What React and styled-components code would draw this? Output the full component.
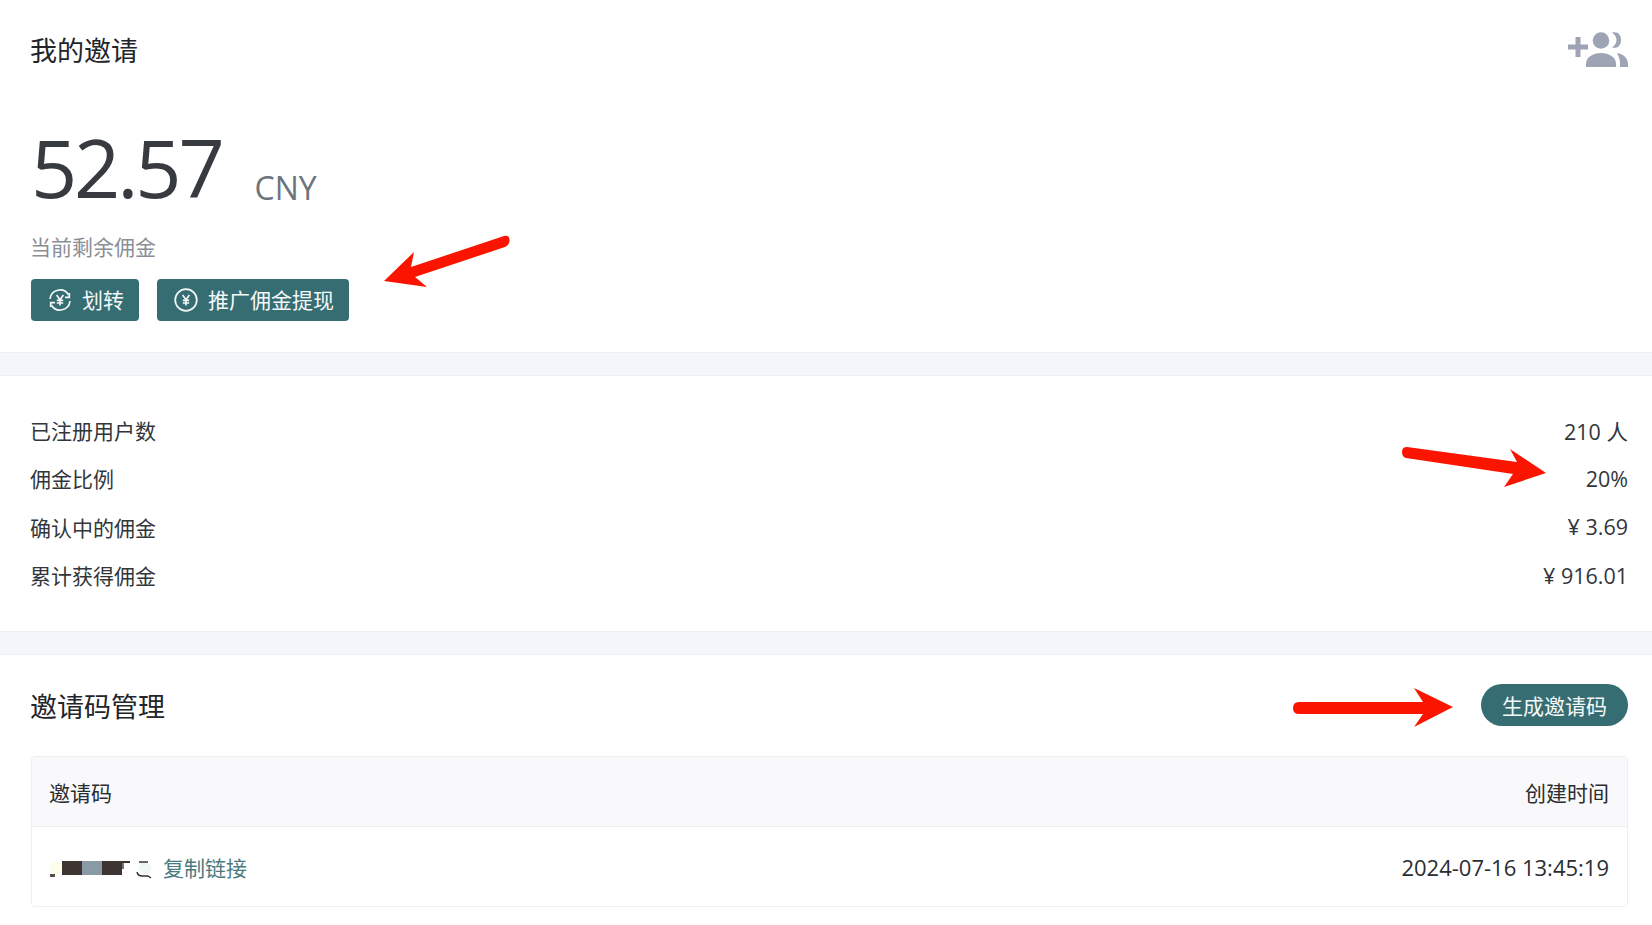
import React from "react";
import styled, { createGlobalStyle } from "styled-components";

const FONT = `"Open Sans", "Noto Sans CJK SC", sans-serif`;
const TEAL = "#366d72";

const GlobalStyle = createGlobalStyle`
  html, body {
    margin: 0;
    background: #fff;
    font-family: ${FONT};
    color: #32363b;
  }
`;

const Page = styled.div`
  position: relative;
  width: 100%;
  height: 925px;
  overflow: hidden;
`;

const Section = styled.section`
  padding: ${(p) => p.$padding};
`;

const Band = styled.div`
  height: 22px;
  background: #f4f6fb;
  border-top: 1px solid #eceef2;
  border-bottom: 1px solid #eceef2;
`;

const HeaderRow = styled.div`
  display: flex;
  justify-content: space-between;
  align-items: center;
`;

const Title = styled.h2`
  margin: 0;
  padding-top: ${(p) => p.$nudge || 0}px;
  font-weight: 400;
  font-size: ${(p) => p.$size};
  color: #22252a;
  line-height: 40px;
`;

const AmountRow = styled.div`
  display: flex;
  align-items: baseline;
  margin-top: 51px;
  height: 90px;
  line-height: 90px;
`;

const Amount = styled.span`
  font-size: 81px;
  font-weight: 400;
  letter-spacing: -3.2px;
  color: #373b40;
  margin-left: 1px;
`;

const Unit = styled.span`
  font-size: 32px;
  color: #6c757d;
  margin-left: 33px;
  transform: translateY(2px);
`;

const Hint = styled.div`
  margin-top: 19px;
  font-size: 21px;
  line-height: 32px;
  color: #8a8f96;
`;

const Actions = styled.div`
  display: flex;
  gap: 18px;
  margin: 16px 0 0 1px;
`;

const ActionButton = styled.button`
  display: flex;
  align-items: center;
  gap: 10px;
  height: 42px;
  padding: 0 15px 0 17px;
  background: ${TEAL};
  border: 0;
  border-radius: 4px;
  color: #f4f8f8;
  font-family: ${FONT};
  font-size: 21px;
`;

const ActionLabel = styled.span`
  margin-top: -2px;
`;

const Stat = styled.div`
  display: flex;
  justify-content: space-between;
  align-items: center;
  height: 48.3px;
  font-size: 21px;
`;

const StatValue = styled.span`
  font-size: 21.5px;
`;

const PillButton = styled.button`
  width: 147px;
  height: 42px;
  background: ${TEAL};
  border: 0;
  border-radius: 21px;
  color: #f4f8f8;
  font-family: ${FONT};
  font-size: 21px;
  padding: 0;
`;

const Table = styled.div`
  margin-top: 29px;
  margin-left: 1px;
  border: 1px solid #eceef1;
  border-radius: 4px;
  overflow: hidden;
`;

const Row = styled.div`
  display: flex;
  justify-content: space-between;
  align-items: center;
  padding: 0 18px 0 17px;
  height: ${(p) => p.$height};
  background: ${(p) => (p.$head ? "#f9f9fb" : "#fff")};
  border-bottom: ${(p) => (p.$head ? "1px solid #eceef1" : "0")};
  font-size: ${(p) => p.$size};
  color: #2a2d31;
`;

const Code = styled.span`
  display: flex;
  align-items: center;
  gap: 11px;
`;

const CopyLink = styled.a`
  color: #4b7a80;
  font-size: 21px;
`;

const ArrowLayer = styled.svg`
  position: absolute;
  left: 0;
  top: 0;
  pointer-events: none;
`;

const GroupSvg = styled.svg`
  margin-top: -3px;
  fill: #9ea4b3;
`;

const MosaicSvg = styled.svg`
  margin-top: 8px;
`;

const AddGroupIcon = () => (
  <GroupSvg width="60" height="37" viewBox="0 0 60 37">
    <rect x="0" y="13.500" width="20" height="5" />
    <rect x="7.500" y="6" width="5" height="20" />
    <circle cx="33" cy="9.500" r="8.300" />
    <path d="M18 36v-3C18 26 25 22 33 22S48 26 48 33v3z" />
    <path d="M44 1.500C50 0 53 4 53 9S50 18 44 16.500C47 14 48.500 12 48.500 9S47 4 44 1.500z" />
    <path d="M49 22C56 23 60 28 60 33v3h-8v-3C52 29 51 25 49 22z" />
  </GroupSvg>
);

const YenMark = () => (
  <path
    d="M8.600 7l3.400 4.800 3.400-4.800M12 11.800v5.700M8.800 12.400h6.400M8.800 15h6.400"
    fill="none"
    stroke="currentColor"
    strokeWidth="1.600"
  />
);

const SwapIcon = () => (
  <svg width="24" height="24" viewBox="0 0 24 24" fill="none" stroke="currentColor" strokeWidth="1.700">
    <path d="M2 11A10 10 0 0 1 20.500 6.800" />
    <path d="M21.300 5v4.300H17" />
    <path d="M22 13A10 10 0 0 1 3.500 17.200" />
    <path d="M2.700 19v-4.300H7" />
    <YenMark />
  </svg>
);

const YenIcon = () => (
  <svg width="24" height="24" viewBox="0 0 24 24" fill="none" stroke="currentColor" strokeWidth="1.700">
    <circle cx="12" cy="12" r="10.800" />
    <YenMark />
  </svg>
);

// the code is pixelated out in the screenshot, so it is drawn as a mosaic
const CodeMosaic = () => (
  <MosaicSvg width="103" height="20" viewBox="0 0 103 20">
    <circle cx="7" cy="7" r="6.500" fill="#fdfdea" />
    <rect x="1" y="13" width="5" height="3" fill="#55524c" />
    <rect x="13" y="0" width="20" height="14" fill="#3e3533" />
    <rect x="33" y="0" width="20" height="14" fill="#8a9ba8" />
    <rect x="53" y="0" width="20" height="14" fill="#3e3533" />
    <rect x="73" y="0" width="8" height="2" fill="#3e3533" />
    <rect x="73" y="2" width="2" height="6" fill="#77726d" />
    <circle cx="96" cy="7" r="6.500" fill="#f1f8f4" />
    <path d="M90 1h9M88 11q1 4 5 4h6l3 2" fill="none" stroke="#33343a" strokeWidth="1.500" />
  </MosaicSvg>
);

const stats = [
  ["已注册用户数", "210 人"],
  ["佣金比例", "20%"],
  ["确认中的佣金", "¥ 3.69"],
  ["累计获得佣金", "¥ 916.01"],
];

export default function App() {
  return (
    <Page>
      <GlobalStyle />
      <Section $padding="31px 24px 31px 30px">
        <HeaderRow>
          <Title $size="27px">我的邀请</Title>
          <AddGroupIcon />
        </HeaderRow>
        <AmountRow>
          <Amount>52.57</Amount>
          <Unit>CNY</Unit>
        </AmountRow>
        <Hint>当前剩余佣金</Hint>
        <Actions>
          <ActionButton>
            <SwapIcon />
            <ActionLabel>划转</ActionLabel>
          </ActionButton>
          <ActionButton>
            <YenIcon />
            <ActionLabel>推广佣金提现</ActionLabel>
          </ActionButton>
        </Actions>
      </Section>
      <Band />
      <Section $padding="30px 24px 32px 30px">
        {stats.map(([label, value]) => (
          <Stat key={label}>
            <span>{label}</span>
            <StatValue>{value}</StatValue>
          </Stat>
        ))}
      </Section>
      <Band />
      <Section $padding="28px 24px 0 30px">
        <HeaderRow>
          <Title $size="27px" $nudge={4}>邀请码管理</Title>
          <PillButton>生成邀请码</PillButton>
        </HeaderRow>
        <Table>
          <Row $head $height="69px" $size="21px">
            <span>邀请码</span>
            <span>创建时间</span>
          </Row>
          <Row $height="79px" $size="22px">
            <Code>
              <CodeMosaic />
              <CopyLink>复制链接</CopyLink>
            </Code>
            <span>2024-07-16 13:45:19</span>
          </Row>
        </Table>
      </Section>
      <ArrowLayer width="1652" height="925" viewBox="0 0 1652 925" fill="#fb1500">
        <path d="M384 281L414 252L411 267L504 236Q510 235 509.500 241Q509 245 505 247L415 277L427 287z" />
        <path d="M1546 473L1510 449L1517 462L1407 447Q1402 447 1402 452Q1402 457 1406 458L1513 474L1504 487z" />
        <path d="M1453 707L1414 688L1423 702H1299Q1293 702 1293 708Q1293 714 1299 714H1423L1414 727z" />
      </ArrowLayer>
    </Page>
  );
}
